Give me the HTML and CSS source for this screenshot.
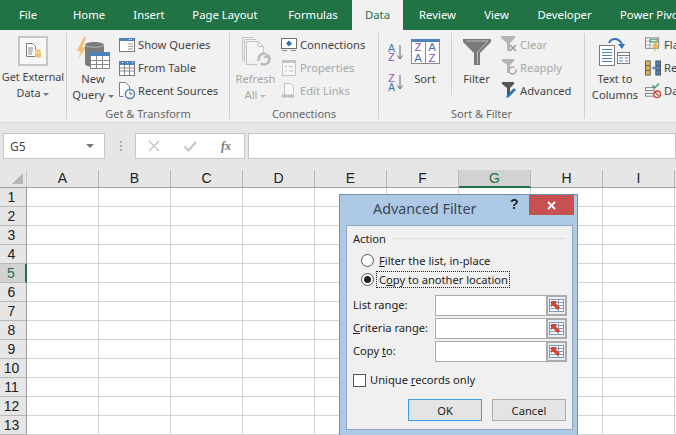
FILE: index.html
```html
<!DOCTYPE html>
<html lang="en">
<head>
<meta charset="utf-8">
<title>Advanced Filter</title>
<link rel="stylesheet" href="styles.css">
</head>
<body>
<div class="app">
  <nav class="tabs">
    <span class="tab t-file">File</span>
    <span class="tab t-home">Home</span>
    <span class="tab t-insert">Insert</span>
    <span class="tab t-layout">Page Layout</span>
    <span class="tab t-formulas">Formulas</span>
    <span class="tab t-data">Data</span>
    <span class="tab t-review">Review</span>
    <span class="tab t-view">View</span>
    <span class="tab t-dev">Developer</span>
    <span class="tab t-pivot">Power Pivot</span>
  </nav>

  <section class="ribbon">
    <div class="group g-ext">
      <div class="group-body">
        <div class="large w-ext">
          <div class="icon-h icon-ext"><div class="ext-box">
            <svg width="18" height="18" viewBox="0 0 18 18"><path d="M2.500 1.500h6l3 3v3M11.500 14.500h-9v-13" fill="#fff" stroke="#7c7c7c"/><path d="M4 6h5M4 8h5M4 10h4M4 12h4" stroke="#8a8a8a"/><path d="M11 8.500c0-1.500 6-1.500 6 0v6c0 1.500-6 1.500-6 0z" fill="#edbf6b"/><path d="M11 10c1 1 5 1 6 0" stroke="#f8ecd0" fill="none"/></svg>
          </div></div>
          <div class="lbl">Get External</div>
          <div class="lbl">Data <i class="caret"></i></div>
        </div>
      </div>
      <div class="group-name">&nbsp;</div>
    </div>

    <div class="group g-get">
      <div class="group-body">
        <div class="large w-new">
          <div class="icon-h">
            <svg width="36" height="36" viewBox="0 0 36 36"><path d="M13 1h-3L1 19h5l-3 9 10-14H8z" transform="translate(1 2) scale(.8)" fill="#f0c078"/><path d="M10 11c0-4 19-4 19 0v19c0 4-19 4-19 0z" fill="#7b7b7b"/><path d="M10 11c2 3 17 3 19 0" stroke="#b5b5b5" fill="none"/><rect x="15.500" y="18.500" width="19" height="16" fill="#fff" stroke="#8a8a8a"/><rect x="15" y="18" width="20" height="4" fill="#4f81bd"/><path d="M16 26.500h18M16 30.500h18M21.500 22v12M27.500 22v12" stroke="#8a8a8a"/></svg>
          </div>
          <div class="lbl">New</div>
          <div class="lbl">Query <i class="caret"></i></div>
        </div>
        <div class="small-col">
          <div class="small"><svg width="16" height="16" viewBox="0 0 16 16"><rect x=".5" y="1.500" width="15" height="13" fill="#fff" stroke="#7c7c7c"/><rect y="1" width="16" height="3" fill="#4f81bd"/><path d="M9 7h5M9 9.500h5M9 12h5" stroke="#9a9a9a"/><path d="M10 2.500h1M12 2.500h1" stroke="#fff"/></svg><span>Show Queries</span></div>
          <div class="small"><svg width="16" height="16" viewBox="0 0 16 16"><rect x=".5" y="1.500" width="15" height="14" fill="#fff" stroke="#7c7c7c"/><rect y="1" width="16" height="4" fill="#4f81bd"/><path d="M1 8h14M1 11h14M5.500 5v10M10.500 5v10" stroke="#8a8a8a"/><path d="M3 2.500h1M8 2.500h1M13 2.500h1" stroke="#fff"/></svg><span>From Table</span></div>
          <div class="small"><svg width="16" height="18" viewBox="0 0 16 18"><path d="M.5 14.500V.5h6l4 4v3" fill="#fff" stroke="#7c7c7c"/><path d="M.5 14.500h4" stroke="#7c7c7c"/><circle cx="11" cy="12" r="4.500" fill="#fff" stroke="#4f81bd" stroke-width="1.400"/><path d="M11 9.500V12h2.500" fill="none" stroke="#555"/></svg><span>Recent Sources</span></div>
        </div>
      </div>
      <div class="group-name">Get &amp; Transform</div>
    </div>

    <div class="group g-conn">
      <div class="group-body">
        <div class="large w-refresh off">
          <div class="icon-h">
            <svg width="32" height="32" viewBox="0 0 32 32"><path d="M2.500 24.500v-23h11M4.500 26.500v-23h12M6.500 28.500V5.500h12l5 5v8M6.500 28.500h11" fill="#f4f4f4" stroke="#c2c2c2"/><path d="M18 5.500v5h5" fill="none" stroke="#c2c2c2"/><circle cx="24" cy="23" r="5.500" fill="none" stroke="#b8b8b8" stroke-width="2.500" stroke-dasharray="12 3"/><path d="M28 17v5h-5z" fill="#b8b8b8"/></svg>
          </div>
          <div class="lbl">Refresh</div>
          <div class="lbl">All <i class="caret"></i></div>
        </div>
        <div class="small-col">
          <div class="small"><svg width="16" height="16" viewBox="0 0 16 16"><rect x=".5" y="1.500" width="15" height="10" fill="#fff" stroke="#6e6e6e"/><path d="M8 3.500l3 3-3 3-3-3z" fill="#2e75b6"/><path d="M1 13.500h5M10 13.500h5" stroke="#8a8a8a"/></svg><span>Connections</span></div>
          <div class="small off"><svg width="16" height="16" viewBox="0 0 16 16"><rect x="1.500" y=".5" width="13" height="15" fill="#f6f6f6" stroke="#c4c4c4"/><rect x="1" y="1" width="14" height="2" fill="#c4c4c4"/><path d="M4 6.500h2M8 6.500h4M4 11h2M8 11h4" stroke="#bdbdbd"/></svg><span>Properties</span></div>
          <div class="small off"><svg width="16" height="18" viewBox="0 0 16 18"><path d="M3.500 13V1.500h6l3 3V11" fill="#f6f6f6" stroke="#c4c4c4"/><path d="M2 14h3M8 14h4" stroke="#bdbdbd" stroke-width="3" stroke-linecap="round" fill="none"/><path d="M4 14h5" stroke="#bdbdbd"/></svg><span>Edit Links</span></div>
        </div>
      </div>
      <div class="group-name">Connections</div>
    </div>

    <div class="group g-sort">
      <div class="group-body">
        <div class="az-col">
          <div class="az"><span class="az-a"><b class="blue">A</b><b class="violet">Z</b></span><svg width="6" height="15" viewBox="0 0 6 15"><path d="M3 0v13M.5 10.500L3 14l2.500-3.500" fill="none" stroke="#666"/></svg></div>
          <div class="az"><span class="az-a"><b class="violet">Z</b><b class="blue">A</b></span><svg width="6" height="15" viewBox="0 0 6 15"><path d="M3 0v13M.5 10.500L3 14l2.500-3.500" fill="none" stroke="#666"/></svg></div>
        </div>
        <div class="large w-sort">
          <div class="icon-h"><div class="sort-ico">
            <div class="sort-cell"><b class="violet">Z</b><b class="blue">A</b></div>
            <div class="sort-cell"><b class="blue">A</b><b class="violet">Z</b></div>
          </div></div>
          <div class="lbl">Sort</div>
        </div>
        <div class="vsep"></div>
        <div class="large w-filter">
          <div class="icon-h">
            <svg width="28" height="28" viewBox="0 0 28 28"><path d="M0 1h28v3L17 15v12h-6V15L0 4z" fill="#7a7a7a"/><path d="M3 3h22L14.500 14v12" fill="none" stroke="#bdbdbd"/></svg>
          </div>
          <div class="lbl">Filter</div>
        </div>
        <div class="small-col">
          <div class="small off"><svg width="16" height="17" viewBox="0 0 16 17"><path d="M0 0h14v2L9 7v8H6V7L0 2z" fill="#b5b5b5"/><path d="M9 9l6 6M15 9l-6 6" stroke="#9a9a9a" stroke-width="1.500"/></svg><span>Clear</span></div>
          <div class="small off"><svg width="16" height="17" viewBox="0 0 16 17"><path d="M1 0h12v2L9 6v8H6V6L1 2z" fill="#b5b5b5"/><circle cx="11.500" cy="11.500" r="3.500" fill="none" stroke="#a8a8a8" stroke-width="1.500" stroke-dasharray="8 2"/></svg><span>Reapply</span></div>
          <div class="small"><svg width="16" height="17" viewBox="0 0 16 17"><path d="M1 0h12v2L9 6v8H6V6L1 2z" fill="#555"/><path d="M5 16l1-3 7-7 2 2-7 7z" fill="#2e75b6"/></svg><span>Advanced</span></div>
        </div>
      </div>
      <div class="group-name">Sort &amp; Filter</div>
    </div>

    <div class="group g-tools">
      <div class="group-body">
        <div class="large w-text">
          <div class="icon-h">
            <svg width="32" height="30" viewBox="0 0 32 30"><rect x=".5" y="8.500" width="15" height="20" fill="#fff" stroke="#7c7c7c"/><path d="M3 12.500h10M3 15.500h10M3 18.500h10M3 21.500h10M3 24.500h10" stroke="#4f81bd"/><rect x="18.500" y="15.500" width="12" height="11" fill="#fff" stroke="#7c7c7c"/><path d="M19 18.500h11" stroke="#7c7c7c"/><path d="M20 21h4M26 21h3M20 24h4M26 24h3" stroke="#4f81bd"/><path d="M10 6c2-5 9-6 13 1" fill="none" stroke="#2e75b6" stroke-width="1.800"/><path d="M19 7h7l-3 5z" fill="#2e75b6"/></svg>
          </div>
          <div class="lbl">Text to</div>
          <div class="lbl">Columns</div>
        </div>
        <div class="small-col">
          <div class="small"><svg width="17" height="17" viewBox="0 0 17 17"><rect x=".5" y="1.500" width="14" height="11" fill="#fff" stroke="#7c7c7c"/><path d="M1 5h14M1 9h14M5 2v10" stroke="#a0a0a0"/><rect x="6" y="3" width="7" height="3" fill="none" stroke="#3e9b5f"/><path d="M13 7h-3l-2 5h3l-2 5 6-7h-3z" fill="#edb44e"/></svg><span>Flash Fill</span></div>
          <div class="small"><svg width="17" height="16" viewBox="0 0 17 16"><rect x=".5" y=".5" width="5" height="15" fill="#edb44e" stroke="#555"/><rect x="11.500" y=".5" width="5" height="15" fill="#4f81bd" stroke="#555"/><path d="M1 5.500h4M1 10.500h4M12 5.500h4M12 10.500h4" stroke="#555"/><path d="M7 8h2.500" stroke="#2e75b6"/><path d="M9 6l2 2-2 2z" fill="#2e75b6"/></svg><span>Remove Duplicates</span></div>
          <div class="small"><svg width="17" height="17" viewBox="0 0 17 17"><rect x=".5" y="5.500" width="9" height="3" fill="#fff" stroke="#7c7c7c"/><rect x=".5" y="11.500" width="9" height="3" fill="#fff" stroke="#7c7c7c"/><path d="M8 3l2.500 2.500L15 1" fill="none" stroke="#3e9b5f" stroke-width="1.500"/><circle cx="13" cy="12.500" r="3.500" fill="#fff" stroke="#c9442f" stroke-width="1.400"/><path d="M10.500 10l5 5" stroke="#c9442f" stroke-width="1.400"/></svg><span>Data Validation</span></div>
        </div>
      </div>
      <div class="group-name">&nbsp;</div>
    </div>
  </section>

  <section class="formula-bar">
    <div class="name-box"><span>G5</span><i class="name-caret"></i></div>
    <div class="grip"></div>
    <div class="fx-box">
      <svg width="14" height="14" viewBox="0 0 14 14"><path d="M2 2l10 10M12 2L2 12" stroke="#c4c4c4" stroke-width="1.400"/></svg>
      <svg width="14" height="14" viewBox="0 0 14 14"><path d="M1.500 7.500l4 4L13 3" fill="none" stroke="#c4c4c4" stroke-width="2"/></svg>
      <span class="fx">fx</span>
    </div>
    <div class="formula-input"></div>
  </section>

  <section class="sheet">
    <div class="col-heads">
      <div class="corner"><i></i></div>
      <div class="col">A</div><div class="col">B</div><div class="col">C</div><div class="col">D</div><div class="col">E</div><div class="col">F</div><div class="col sel">G</div><div class="col">H</div><div class="col">I</div>
    </div>
    <div class="row"><div class="rh">1</div><div class="cells"></div></div>
    <div class="row"><div class="rh">2</div><div class="cells"></div></div>
    <div class="row"><div class="rh">3</div><div class="cells"></div></div>
    <div class="row"><div class="rh">4</div><div class="cells"></div></div>
    <div class="row"><div class="rh sel">5</div><div class="cells"></div></div>
    <div class="row"><div class="rh">6</div><div class="cells"></div></div>
    <div class="row"><div class="rh">7</div><div class="cells"></div></div>
    <div class="row"><div class="rh">8</div><div class="cells"></div></div>
    <div class="row"><div class="rh">9</div><div class="cells"></div></div>
    <div class="row"><div class="rh">10</div><div class="cells"></div></div>
    <div class="row"><div class="rh">11</div><div class="cells"></div></div>
    <div class="row"><div class="rh">12</div><div class="cells"></div></div>
    <div class="row"><div class="rh">13</div><div class="cells"></div></div>
  </section>
</div>

<div class="dialog">
  <header class="dlg-title">
    <span class="dlg-name">Advanced Filter</span>
    <span class="dlg-help">?</span>
    <span class="dlg-close"><svg width="9" height="9" viewBox="0 0 9 9"><path d="M1 1l7 7M8 1L1 8" stroke="#fff" stroke-width="1.800"/></svg></span>
  </header>
  <div class="panel">
    <div class="legend"><span>Action</span><i></i></div>
    <div class="radio"><i class="dot"></i><span><u>F</u>ilter the list, in-place</span></div>
    <div class="radio on"><i class="dot"></i><span class="focus">C<u>o</u>py to another location</span></div>
    <div class="fields">
      <div class="field"><label>List range:</label><div class="input"></div><div class="pick"><svg width="15" height="13" viewBox="0 0 15 13"><rect x=".5" y=".5" width="14" height="12" fill="#fff" stroke="#7f98b8"/><path d="M1 3.500h13M1 6.500h13M1 9.500h13M9.500 1v11" stroke="#7f98b8"/><path d="M2 2h6L6.500 4 11 8.500 8.500 11 4 6.500 2 8z" fill="#d9442c"/></svg></div></div>
      <div class="field"><label><u>C</u>riteria range:</label><div class="input"></div><div class="pick"><svg width="15" height="13" viewBox="0 0 15 13"><rect x=".5" y=".5" width="14" height="12" fill="#fff" stroke="#7f98b8"/><path d="M1 3.500h13M1 6.500h13M1 9.500h13M9.500 1v11" stroke="#7f98b8"/><path d="M2 2h6L6.500 4 11 8.500 8.500 11 4 6.500 2 8z" fill="#d9442c"/></svg></div></div>
      <div class="field"><label>Copy <u>t</u>o:</label><div class="input"></div><div class="pick"><svg width="15" height="13" viewBox="0 0 15 13"><rect x=".5" y=".5" width="14" height="12" fill="#fff" stroke="#7f98b8"/><path d="M1 3.500h13M1 6.500h13M1 9.500h13M9.500 1v11" stroke="#7f98b8"/><path d="M2 2h6L6.500 4 11 8.500 8.500 11 4 6.500 2 8z" fill="#d9442c"/></svg></div></div>
    </div>
    <div class="check"><i></i><span>Unique <u>r</u>ecords only</span></div>
    <div class="buttons">
      <button class="btn default">OK</button>
      <button class="btn">Cancel</button>
    </div>
  </div>
</div>
</body>
</html>
```
FILE: styles.css
```css
* { box-sizing: border-box; }
html, body { margin: 0; height: 100%; overflow: hidden; background: #fff; }
body { position: relative; width: 676px; height: 435px; font: 11.2px "Noto Sans", "Open Sans", sans-serif; color: #444; }
i { display: block; font-style: normal; }
.app { width: 676px; height: 435px; overflow: hidden; display: flex; flex-direction: column; }

/* tabs */
.tabs { flex: none; display: flex; height: 30px; background: #217346; overflow: hidden; }
.tab { flex: none; display: flex; align-items: center; justify-content: center; color: #fff; font-size: 11.3px; white-space: nowrap; padding-bottom: 1px; }
.t-file { width: 56px; }
.t-home { width: 66px; }
.t-insert { width: 54px; }
.t-layout { width: 98px; }
.t-formulas { width: 78px; }
.t-data { width: 51px; background: #f1f1f1; color: #217346; }
.t-review { width: 69px; }
.t-view { width: 49px; }
.t-dev { width: 87px; }
.t-pivot { flex: 1 0 auto; justify-content: flex-start; padding-left: 12px; }

/* ribbon */
.ribbon { flex: none; height: 93px; display: flex; background: #f1f1f1; border-bottom: 1px solid #d8d8d8; padding-top: 3px; overflow: hidden; }
.group { flex: none; height: 86px; display: flex; flex-direction: column; border-right: 1px solid #d0d0d0; margin-bottom: 3px; }
.group-body { flex: none; height: 73px; display: flex; }
.group-name { flex: none; height: 16px; line-height: 16px; text-align: center; color: #666; font-size: 11px; white-space: nowrap; }
.g-ext { width: 67px; }
.g-get { width: 163px; }
.g-conn { width: 149px; }
.g-sort { width: 206px; }
.g-tools { flex: 1 0 auto; border-right: 0; }
.large { flex: none; display: flex; flex-direction: column; align-items: center; }
.icon-h { flex: none; height: 38px; display: flex; align-items: center; justify-content: center; }
.icon-h.icon-ext { height: 36px; }
.lbl { height: 16px; line-height: 16px; white-space: nowrap; display: flex; align-items: center; gap: 3px; }
.caret { width: 0; height: 0; border: 3px solid transparent; border-top: 3px solid #777; border-bottom: 0; margin-top: 2px; }
.off { color: #a6a6a6; }
.off .caret { border-top-color: #bbb; }
.w-ext { width: 66px; font-size: 10.8px; }
.ext-box { width: 30px; height: 30px; border: 2px solid #c6c6c6; background: #f7f7f7; display: flex; align-items: center; justify-content: center; }
.w-new { width: 52px; }
.w-refresh { width: 51px; }
.w-sort { width: 40px; }
.w-filter { width: 49px; }
.w-text { width: 60px; }
.small-col { flex: none; display: flex; flex-direction: column; }
.small { height: 23px; display: flex; align-items: center; gap: 3px; white-space: nowrap; }
.small svg { flex: none; width: 16px; }

.az-col { flex: none; width: 26px; padding: 9px 0 0 8px; display: flex; flex-direction: column; gap: 9px; }
.az { height: 21px; display: flex; align-items: center; gap: 1px; }
.az-a { display: flex; flex-direction: column; width: 9px; }
.az-a b { height: 9px; font: 400 10.5px/9px "Liberation Sans", sans-serif; text-align: center; }
.blue { color: #4472b8; }
.violet { color: #8a50b4; }
.sort-ico { width: 29px; height: 25px; margin-top: -1px; border: 1px solid #8a8a8a; border-top: 3px solid #4f81bd; background: #fff; display: flex; }
.sort-cell { flex: 1; display: flex; flex-direction: column; }
.sort-cell + .sort-cell { border-left: 1px solid #8a8a8a; }
.sort-cell b { height: 10.500px; font: 400 11.5px/10.5px "Liberation Sans", sans-serif; text-align: center; }
.vsep { flex: none; width: 1px; height: 62px; background: #d0d0d0; margin-left: 6px; }

/* formula bar */
.formula-bar { flex: none; height: 47px; background: #e6e6e6; display: flex; align-items: flex-start; padding: 10px 0 0 3px; }
.name-box { flex: none; width: 102px; height: 26px; background: #fff; border: 1px solid #c6c6c6; display: flex; align-items: center; justify-content: space-between; padding: 0 10px 0 6px; font-size: 12px; }
.name-caret { width: 0; height: 0; border: 4px solid transparent; border-top: 4px solid #777; border-bottom: 0; }
.grip { flex: none; width: 2px; height: 11px; margin: 8px 13px 0 15px; background: repeating-linear-gradient(#b0b0b0 0 2px, transparent 2px 4px); }
.fx-box { flex: none; width: 110px; height: 26px; background: #fff; border: 1px solid #c6c6c6; display: flex; align-items: center; gap: 22px; padding-left: 11px; }
.fx { font: italic 700 12px "Liberation Serif", serif; color: #777; margin-left: 2px; }
.formula-input { flex: 1; height: 26px; background: #fff; border: 1px solid #c6c6c6; margin-left: 3px; }

/* sheet */
.sheet { flex: 1; min-height: 0; font-family: "Liberation Sans", Arial, sans-serif; color: #222; background: #fff; }
.col-heads { display: flex; height: 18px; background: #e6e6e6; border-bottom: 1px solid #9f9f9f; }
.corner { flex: none; width: 27px; position: relative; border-right: 1px solid #c8c8c8; }
.corner i { position: absolute; right: 3px; bottom: 3px; width: 0; height: 0; border-style: solid; border-width: 0 0 11px 11px; border-color: transparent transparent #b5b5b5 transparent; }
.col { flex: none; width: 72px; text-align: center; font-size: 14px; line-height: 17px; border-right: 1px solid #b8b8b8; }
.col.sel { background: #d2d2d2; color: #217346; border-bottom: 2px solid #217346; height: 18px; }
.row { display: flex; height: 19px; }
.rh { flex: none; width: 27px; background: #e6e6e6; border-right: 1px solid #9f9f9f; border-bottom: 1px solid #b8b8b8; text-align: center; font-size: 14px; line-height: 18px; padding-right: 3px; }
.rh.sel { background: #d2d2d2; color: #217346; border-right: 2px solid #217346; }
.cells { flex: 1; border-bottom: 1px solid #d4d4d4; background: repeating-linear-gradient(90deg, transparent 0 71px, #d4d4d4 71px 72px); }

/* dialog */
.dialog { position: absolute; left: 339px; top: 194px; width: 239px; height: 250px; background: #adc9e6; border: 1px solid #6f8fb0; padding: 0 4px 0 6px; display: flex; flex-direction: column; color: #222; font-size: 11.15px; }
.dlg-title { flex: none; height: 30px; position: relative; }
.dlg-name { position: absolute; left: 27px; top: 4px; font-size: 14.3px; color: #3c4754; white-space: nowrap; }
.dlg-help { position: absolute; left: 164px; top: 1px; font: 700 14px "Liberation Sans", sans-serif; color: #222; }
.dlg-close { position: absolute; right: -1px; top: 0; width: 45px; height: 20px; background: #c75050; display: flex; align-items: center; justify-content: center; }
.panel { flex: none; width: 227px; height: 205px; background: #f0f0f0; border: 1px solid #8ea6c0; padding: 4px 6px 0 6px; }
.legend { height: 16px; display: flex; align-items: center; gap: 6px; }
.legend i { flex: 1; height: 1px; background: #dcdcdc; }
.radio { height: 19px; display: flex; align-items: center; gap: 4px; margin-left: 8px; white-space: nowrap; }
.legend + .radio { margin-top: 5px; }
.dot { flex: none; width: 13px; height: 13px; border-radius: 50%; border: 1px solid #555; background: #fff; position: relative; }
.radio.on .dot::after { content: ""; position: absolute; left: 2px; top: 2px; width: 7px; height: 7px; border-radius: 50%; background: #222; }
.radio span { padding-left: 1px; line-height: 15px; height: 15px; }
.radio .focus { outline: 1px dotted #222; margin-left: -1px; padding: 0 1px 0 2px; }
.fields { margin-top: 6px; display: flex; flex-direction: column; gap: 2px; }
.field { height: 21px; display: flex; align-items: center; }
.field label { flex: none; width: 82px; white-space: nowrap; padding-bottom: 2px; }
.input { flex: none; width: 111px; height: 21px; background: #fff; border: 1px solid #ababab; border-right: 0; }
.pick { flex: none; width: 21px; height: 21px; border: 2px solid #ababab; background: #e9eef4; display: flex; align-items: center; justify-content: center; }
.check { margin-top: 11px; height: 14px; display: flex; align-items: center; gap: 4px; white-space: nowrap; }
.check span { padding-bottom: 2px; }
.check i { flex: none; width: 13px; height: 13px; background: #fff; border: 1px solid #555; }
.buttons { margin-top: 12px; display: flex; gap: 10px; margin-left: 55px; }
.btn { width: 74px; height: 22px; background: #e4e4e4; border: 1px solid #adadad; font: 11.2px "Noto Sans", sans-serif; color: #222; padding: 0; }
.btn.default { border: 1px solid #3f9ce8; }
```
